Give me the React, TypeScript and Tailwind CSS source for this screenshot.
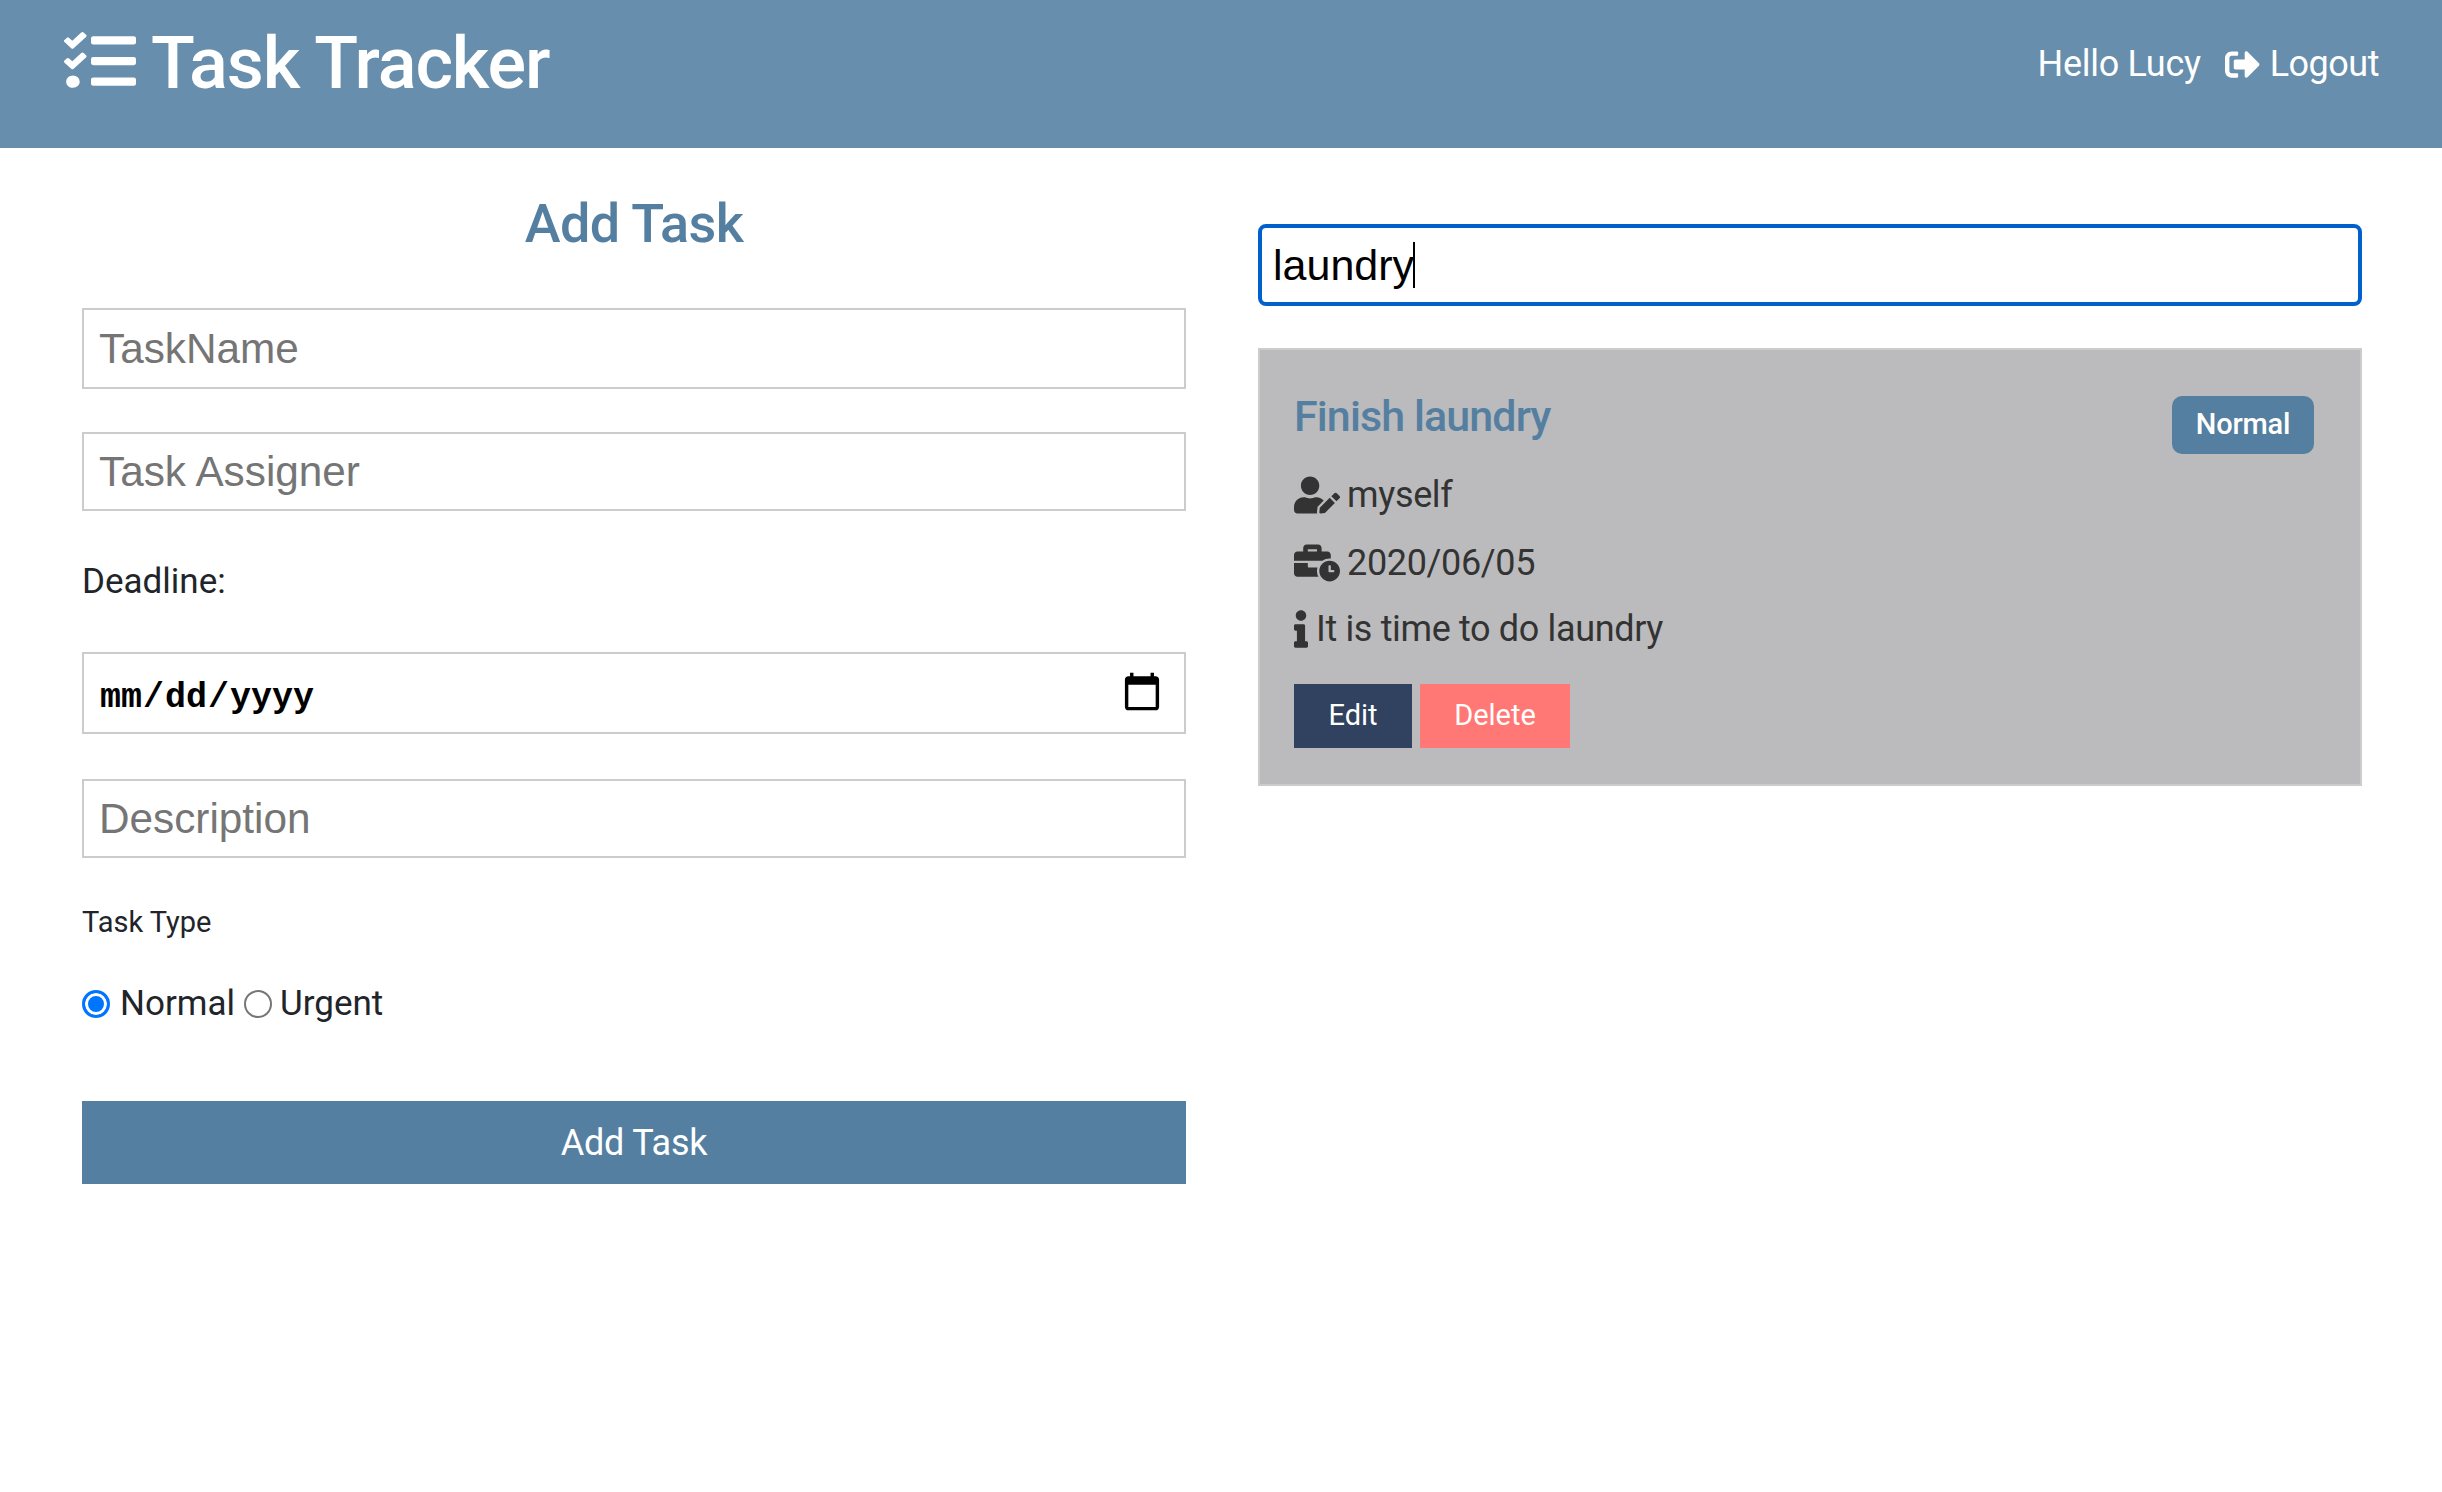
import { useEffect, useRef } from 'react'
import { FaBusinessTime, FaInfo, FaSignOutAlt, FaTasks, FaUserEdit } from 'react-icons/fa'

const inputClass =
  "block w-full border-2 border-[#cccccc] bg-white px-[15px] text-[42.3px] font-['Liberation_Sans',sans-serif] text-black placeholder:text-[#757575] outline-none"

const radioClass =
  'h-[28px] w-[28px] appearance-none rounded-full border-2 border-[#767676] bg-white checked:border-[3px] checked:border-[#0075ff] checked:bg-[#0075ff] checked:shadow-[inset_0_0_0_3px_white]'

function Header() {
  return (
    <header className="flex h-[148px] items-start justify-between bg-[#678eac] pl-[64px] pr-[63px] text-white">
      <div className="flex items-center gap-[15px] pt-[24px]">
        <FaTasks className="mb-[6px] h-[66px] w-[72px]" preserveAspectRatio="none" />
        <h1 className="text-[72px] font-medium leading-[80px] tracking-[-1.1px]">Task Tracker</h1>
      </div>
      <div className="flex items-center gap-[24px] pt-[40px] text-[36px] leading-[48px]">
        <span className="tracking-[-0.3px]">Hello Lucy</span>
        <a className="flex items-center gap-[10px] tracking-[-0.5px]">
          <FaSignOutAlt className="h-[35px] w-[35px]" />
          Logout
        </a>
      </div>
    </header>
  )
}

function AddTaskForm() {
  return (
    <form className="flex flex-col">
      <h2 className="mb-[45px] mt-[37px] text-center text-[54px] font-medium leading-[78px] tracking-[-0.6px] text-[#557fa1]">
        Add Task
      </h2>
      <input className={`${inputClass} h-[81px]`} placeholder="TaskName" />
      <input className={`${inputClass} mt-[43px] h-[79px]`} placeholder="Task Assigner" />
      <label className="mb-[45px] mt-[46px] text-[35px] leading-[50px] text-[#212529]">Deadline:</label>
      <input
        type="date"
        className="block h-[82px] w-full border-2 border-[#cccccc] bg-white px-[15px] font-['Liberation_Mono',monospace] text-[35px] font-bold text-black outline-none [&::-webkit-calendar-picker-indicator]:m-0 [&::-webkit-calendar-picker-indicator]:mr-[5px] [&::-webkit-calendar-picker-indicator]:h-[44px] [&::-webkit-calendar-picker-indicator]:w-[44px] [&::-webkit-calendar-picker-indicator]:p-0 [&::-webkit-datetime-edit]:pt-[10px]"
      />
      <input className={`${inputClass} mt-[45px] h-[79px]`} placeholder="Description" />
      <label className="mt-[46px] text-[29px] leading-[36px] text-[#212529]">Task Type</label>
      <div className="mt-[44px] flex h-[40px] items-center text-[35px] text-[#212529]">
        <input type="radio" name="type" defaultChecked className={`${radioClass} mr-[10px]`} />
        <span>Normal</span>
        <input type="radio" name="type" className={`${radioClass} ml-[9px] mr-[8px]`} />
        <span>Urgent</span>
      </div>
      <button type="button" className="mt-[77px] h-[83px] w-full bg-[#557fa1] text-[36px] tracking-[-0.2px] text-white">
        Add Task
      </button>
    </form>
  )
}

function TaskCard() {
  return (
    <div className="relative mt-[42px] h-[438px] border-2 border-[#cccccc] bg-[#bbbbbd] pl-[34px] pt-[38px] text-[#333333]">
      <span className="absolute right-[46px] top-[46px] flex h-[58px] w-[142px] items-center justify-center rounded-[10px] bg-[#557fa1] text-[29px] font-medium tracking-[-0.2px] text-white">
        Normal
      </span>
      <h3 className="text-[43px] font-medium leading-[56px] tracking-[-0.9px] text-[#557fa1]">Finish laundry</h3>
      <p className="mt-[28px] flex h-[46px] items-center gap-[7px] text-[36px] tracking-[-0.35px]">
        <FaUserEdit className="h-[38px] w-[46px]" />
        myself
      </p>
      <p className="mt-[22px] flex h-[46px] items-center gap-[7px] text-[36px] tracking-[-0.35px]">
        <FaBusinessTime className="h-[38px] w-[46px]" />
        2020/06/05
      </p>
      <p className="mt-[20px] flex h-[46px] items-center gap-[8px] text-[36px] tracking-[-0.35px]">
        <FaInfo className="h-[38px] w-[14px]" />
        It is time to do laundry
      </p>
      <div className="mt-[32px] flex gap-[8px]">
        <button type="button" className="h-[64px] w-[118px] bg-[#30425f] text-[29px] text-white">
          Edit
        </button>
        <button type="button" className="h-[64px] w-[150px] bg-[#ff7875] text-[29px] text-white">
          Delete
        </button>
      </div>
    </div>
  )
}

export default function App() {
  const searchRef = useRef<HTMLInputElement>(null)

  useEffect(() => {
    searchRef.current?.focus()
  }, [])

  return (
    <div className="min-h-[1492px] bg-white font-['Roboto',sans-serif]">
      <Header />
      <main className="grid grid-cols-[1104px_1fr] gap-[72px] pl-[82px] pr-[80px]">
        <AddTaskForm />
        <section className="pt-[76px]">
          <div className="relative">
            <input
              ref={searchRef}
              defaultValue="laundry"
              className="block h-[82px] w-full rounded-[8px] border-[4px] border-[#0060cc] bg-white px-[11px] font-['Liberation_Sans',sans-serif] text-[43px] text-black caret-transparent outline-none"
            />
            {/* headless browser doesn't paint the caret */}
            <span className="absolute left-[155px] top-[18px] h-[46px] w-[2px] bg-black" />
          </div>
          <TaskCard />
        </section>
      </main>
    </div>
  )
}
